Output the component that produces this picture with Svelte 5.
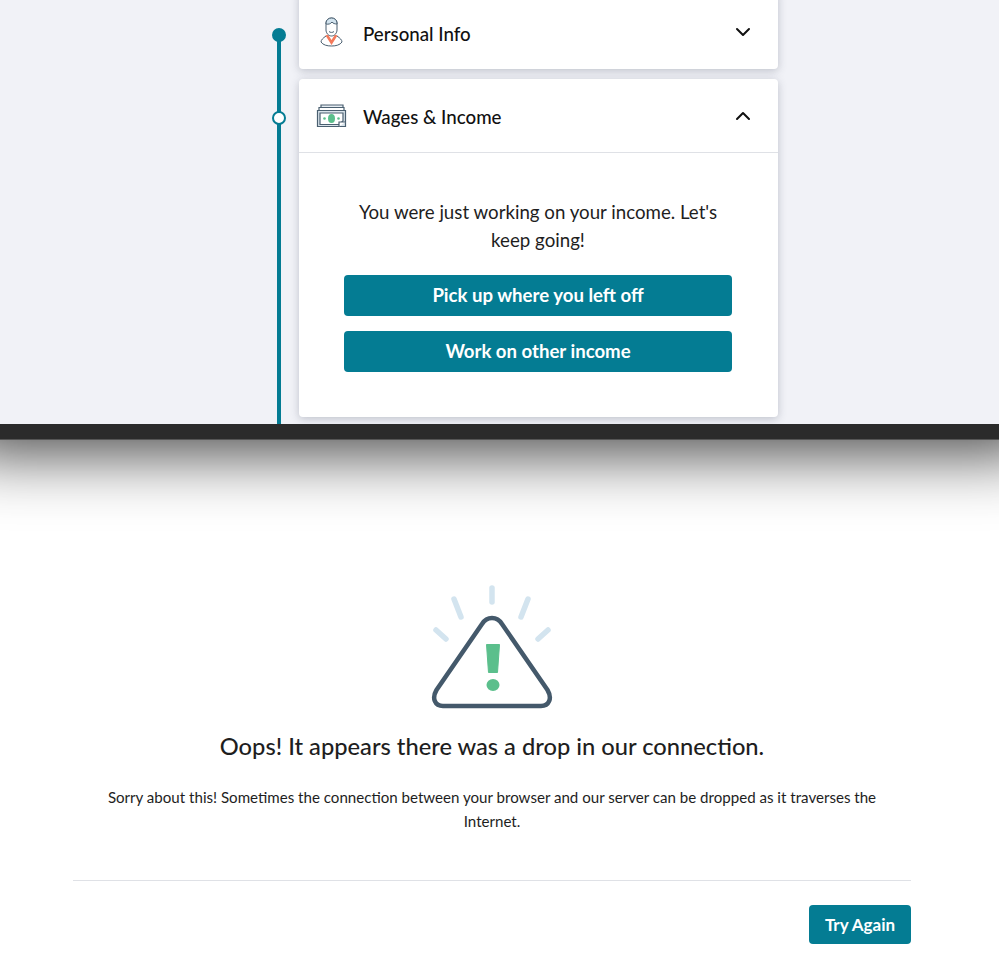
<script>
	let rays = [
		[65, 6, 65, 20],
		[27, 17, 34, 35],
		[101, 17, 94, 35],
		[9, 48, 19, 57],
		[121, 48, 111, 57]
	];
</script>

<div class="page">
	<section class="progress">
		<div class="steps">
			<div class="step step--done">
				<span class="marker marker--filled"></span>
				<div class="card card--cut">
					<header class="card__head">
						<svg class="icon icon--person" width="32" height="32" viewBox="0 0 32 32" fill="none" stroke="#4a5f70" stroke-width="1">
							<path d="M10 20C7 22 5 24 5 26C7 29 11 30 15.500 30S24 29 26 26C26 24 24 22 21 20" fill="#fff" />
							<path d="M9.500 19.500L12 18.500L15.500 24L19 18.500L21.500 19.500L15.500 29Z" fill="#f47a5b" stroke="none" />
							<path d="M10 7c0-3 2.500-5 5.500-5s5.500 2 5.500 5v7c0 3-2.500 6-5.500 6s-5.500-3-5.500-6z" fill="#fff" />
							<path d="M10 8c2.500.5 4.500 0 6-2 1 1.500 3 2 5 2V7c0-3-2.500-5-5.500-5S10 4 10 7z" fill="#d3e4ef" />
							<path d="M13 15.500c1 1.200 4 1.200 5 0" />
						</svg>
						<h2>Personal Info</h2>
						<svg class="chevron" width="16" height="10" viewBox="0 0 16 10" fill="none" stroke="#111" stroke-width="2" stroke-linecap="round" stroke-linejoin="round">
							<path d="M2 2l6 6 6-6" />
						</svg>
					</header>
				</div>
			</div>

			<div class="step">
				<span class="marker"></span>
				<div class="card">
					<header class="card__head card__head--open">
						<svg class="icon" width="32" height="26" viewBox="0 0 32 26" fill="none" stroke="#4a5f70" stroke-width="1.200">
							<path d="M5 7V2h22v5" fill="#e6edf2" />
							<path d="M3 7V4.500h25V7" fill="#fff" />
							<path d="M1.500 7.500h28v16h-28z" fill="#d9e3ea" />
							<path d="M4 10h23v8l-4 3.500H4z" fill="#fff" />
							<path d="M23 23.500V19h6.500" fill="#fff" />
							<ellipse cx="15.500" cy="15.500" rx="3.500" ry="4.500" fill="#5bbf8c" stroke="none" />
							<circle cx="8.500" cy="15.500" r="1.300" fill="#5bbf8c" stroke="none" />
							<circle cx="22.500" cy="15.500" r="1.300" fill="#5bbf8c" stroke="none" />
						</svg>
						<h2>Wages &amp; Income</h2>
						<svg class="chevron" width="16" height="10" viewBox="0 0 16 10" fill="none" stroke="#111" stroke-width="2" stroke-linecap="round" stroke-linejoin="round">
							<path d="M2 8l6-6 6 6" />
						</svg>
					</header>
					<div class="card__body">
						<p>You were just working on your income. Let's keep going!</p>
						<button class="btn btn--wide">Pick up where you left off</button>
						<button class="btn btn--wide">Work on other income</button>
					</div>
				</div>
			</div>
		</div>
	</section>

	<div class="bar"></div>

	<section class="error">
		<svg class="warning" width="130" height="130" viewBox="0 0 130 130" fill="none">
			{#each rays as [x1, y1, x2, y2]}
				<line {x1} {y1} {x2} {y2} stroke="#d3e4ef" stroke-width="5.500" stroke-linecap="round" />
			{/each}
			<path d="M55 42C60 34 70 34 75 42L120.500 108C125.500 116.500 122 124 114 124H16C8 124 4.500 116.500 9.500 108Z" stroke="#44596b" stroke-width="4.500" />
			<path d="M59.500 62.500h13l-2 28h-9z" fill="#5bbf8c" stroke="#5bbf8c" stroke-width="1" stroke-linejoin="round" />
			<ellipse cx="66" cy="103" rx="6.500" ry="6" fill="#5bbf8c" />
		</svg>
		<h1>Oops! It appears there was a drop in our connection.</h1>
		<p>Sorry about this! Sometimes the connection between your browser and our server can be dropped as it traverses the Internet.</p>
		<div class="error__foot">
			<button class="btn btn--small">Try Again</button>
		</div>
	</section>
</div>

<style>
	:global(body) {
		margin: 0;
		background: #fff;
	}

	.page {
		width: 999px;
		height: 961px;
		overflow: hidden;
		font-family: Lato, "Open Sans", sans-serif;
		color: #1e1e1e;
	}

	.progress {
		height: 424px;
		overflow: hidden;
		background: #f1f2f7;
	}

	.steps {
		position: relative;
		display: flex;
		flex-direction: column;
		gap: 10px;
		width: 479px;
		margin-left: 299px;
	}
	.steps::before {
		content: '';
		position: absolute;
		left: -22px;
		top: 35px;
		width: 4px;
		height: 400px;
		background: #047c93;
	}

	.step {
		position: relative;
	}

	.marker {
		position: absolute;
		left: -27px;
		top: 32px;
		box-sizing: border-box;
		width: 14px;
		height: 14px;
		border: 2px solid #047c93;
		border-radius: 50%;
		background: #fff;
	}
	.marker--filled {
		top: 28px;
		background: #047c93;
	}

	.card {
		background: #fff;
		border-radius: 4px;
		box-shadow: 0 2px 8px rgba(60, 70, 90, 0.28);
	}
	.card--cut {
		margin-top: -10px;
		padding-top: 10px;
	}

	.card__head {
		display: flex;
		align-items: center;
		height: 69px;
		padding: 0 27px 0 17px;
	}
	.card__head--open {
		height: 73px;
		border-bottom: 1px solid #dfe1e6;
	}
	.card__head h2 {
		flex: 1;
		margin: 2px 0 0 15px;
		font-size: 18.700px;
		font-weight: 500;
		color: #111;
	}
	.step--done h2 {
		margin-top: -2px;
	}
	.step--done .chevron {
		margin-top: -5px;
	}

	.icon {
		width: 32px;
		flex: none;
	}
	.icon--person {
		margin-top: -6px;
	}

	.card__body {
		display: flex;
		flex-direction: column;
		gap: 15px;
		padding: 45px 46px 45px 45px;
		text-align: center;
	}
	.card__body p {
		margin: 0 0 6px;
		padding: 0 8px;
		font-size: 18.700px;
		line-height: 28px;
	}

	.btn {
		border: 0;
		border-radius: 4px;
		background: #047c93;
		color: #fff;
		font-family: inherit;
		font-weight: 700;
		font-size: 18.600px;
	}
	.btn--wide {
		height: 41px;
		padding-bottom: 3px;
	}
	.btn--small {
		width: 102px;
		height: 39px;
		font-size: 17px;
	}

	.bar {
		position: relative;
		box-sizing: border-box;
		height: 16px;
		background: #2b2b2b;
		border-bottom: 1px solid #555;
		box-shadow: 0 -26px 64px 40px rgba(0, 0, 0, 0.72);
		clip-path: inset(0 0 -100px 0);
	}

	.error {
		display: flex;
		flex-direction: column;
		align-items: center;
		margin-top: 142px;
		padding: 0 88px 0 73px;
		text-align: center;
	}
	.warning {
		flex: none;
	}
	.error h1 {
		margin: 19px 0 0;
		font-size: 23.700px;
		line-height: 30px;
		font-weight: 500;
		white-space: nowrap;
	}
	.error p {
		margin: 24px 0 0;
		padding: 0 20px;
		font-size: 15.100px;
		line-height: 24px;
	}
	.error__foot {
		align-self: stretch;
		display: flex;
		justify-content: flex-end;
		margin-top: 47px;
		padding-top: 24px;
		border-top: 1px solid #dfe1e6;
	}
</style>
